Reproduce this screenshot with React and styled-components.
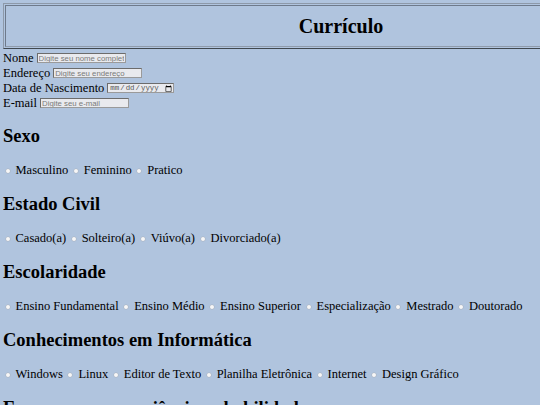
import React from 'react'
import styled, {createGlobalStyle} from 'styled-components'

const GlobalStyle = createGlobalStyle`
  html, body {
    margin: 0;
    padding: 0;
    overflow: hidden;
    background: #b0c4de;
  }
  body {
    padding: 3px 0 0 3px;
    font-family: "Liberation Serif", "Times New Roman", serif;
    color: #000;
  }
`;

const sections = [
    {title: 'Sexo', name: 'sexo', options: ['Masculino', 'Feminino', 'Pratico']},
    {title: 'Estado Civil', name: 'civil', options: ['Casado(a)', 'Solteiro(a)', 'Viúvo(a)', 'Divorciado(a)']},
    {title: 'Escolaridade', name: 'escola', options: ['Ensino Fundamental', 'Ensino Médio', 'Ensino Superior', 'Especialização', 'Mestrado', 'Doutorado']},
    {title: 'Conhecimentos em Informática', name: 'info', options: ['Windows', 'Linux', 'Editor de Texto', 'Planilha Eletrônica', 'Internet', 'Design Gráfico']},
];

export default function App() {
    return (
        <>
            <GlobalStyle/>
            <Header>
                <HeaderCell><Title>Currículo</Title></HeaderCell>
            </Header>
            <Form>
                <Line>Nome<Field type="text" placeholder="Digite seu nome completo"/></Line>
                <Line>Endereço<Field type="text" placeholder="Digite seu endereço"/></Line>
                <Line>Data de Nascimento<DateField type="date"/></Line>
                <Line>E-mail<Field type="text" placeholder="Digite seu e-mail"/></Line>
            </Form>
            {sections.map(s =>
                <section key={s.name}>
                    <Heading>{s.title}</Heading>
                    <Options>
                        {s.options.map(o =>
                            <Option key={o}><Radio type="radio" name={s.name}/>{o}</Option>
                        )}
                    </Options>
                </section>
            )}
            <Heading>Escreva suas experiências e habilidades</Heading>
        </>
    )
}

const Header = styled.div`
  width: 676px;
  height: 46px;
  box-sizing: border-box;
  padding: 1px;
  border: 1px solid;
  border-color: #8d99a9 #404850 #404850 #8d99a9;
`;
const HeaderCell = styled.div`
  height: 100%;
  box-sizing: border-box;
  border: 1px solid;
  border-color: #6e7a8b #8f9bab #8f9bab #6e7a8b;
  display: flex;
  align-items: center;
  justify-content: center;
`;
const Title = styled.h1`
  margin: 0;
  font-size: 20px;
  font-weight: bold;
  line-height: 22px;
`;
const Form = styled.form`
  margin: 1.5px 0 0 0;
`;
const Line = styled.div`
  height: 15px;
  display: flex;
  align-items: center;
  font-size: 12.5px;
  white-space: nowrap;
`;
const Field = styled.input`
  margin: 0 0 0 3px;
  width: 89px;
  height: 10px;
  box-sizing: border-box;
  padding: 0 1px;
  border: 1px solid #6c6c6c;
  border-right-color: #9a9a9a;
  border-bottom-color: #9a9a9a;
  background: #e9eaee;
  font-family: "Liberation Sans", Arial, sans-serif;
  font-size: 7.8px;
  &::placeholder {
    color: #7a7a7a;
  }
`;
const DateField = styled(Field)`
  width: 67px;
  font-family: "Liberation Mono", "DejaVu Sans Mono", monospace;
  font-size: 7.4px;
  color: #555;
  &::-webkit-calendar-picker-indicator {
    margin: 0 0 0 1px;
    padding: 0;
    width: 7px;
    height: 7px;
  }
`;
const Heading = styled.h2`
  margin: 15.5px 0;
  font-size: 18.5px;
  line-height: 21px;
  font-weight: bold;
  white-space: nowrap;
`;
const Options = styled.div`
  height: 16px;
  display: flex;
  align-items: center;
  gap: 5.5px;
  padding-left: 2.5px;
  font-size: 12.5px;
  white-space: nowrap;
`;
const Option = styled.label`
  display: inline-flex;
  align-items: center;
  gap: 6px;
`;
const Radio = styled.input`
  appearance: none;
  margin: 0;
  width: 4px;
  height: 4px;
  border-radius: 50%;
  background: #f7f7f7;
  box-shadow: 0 0 0 0.5px #a9b3c0;
`;
